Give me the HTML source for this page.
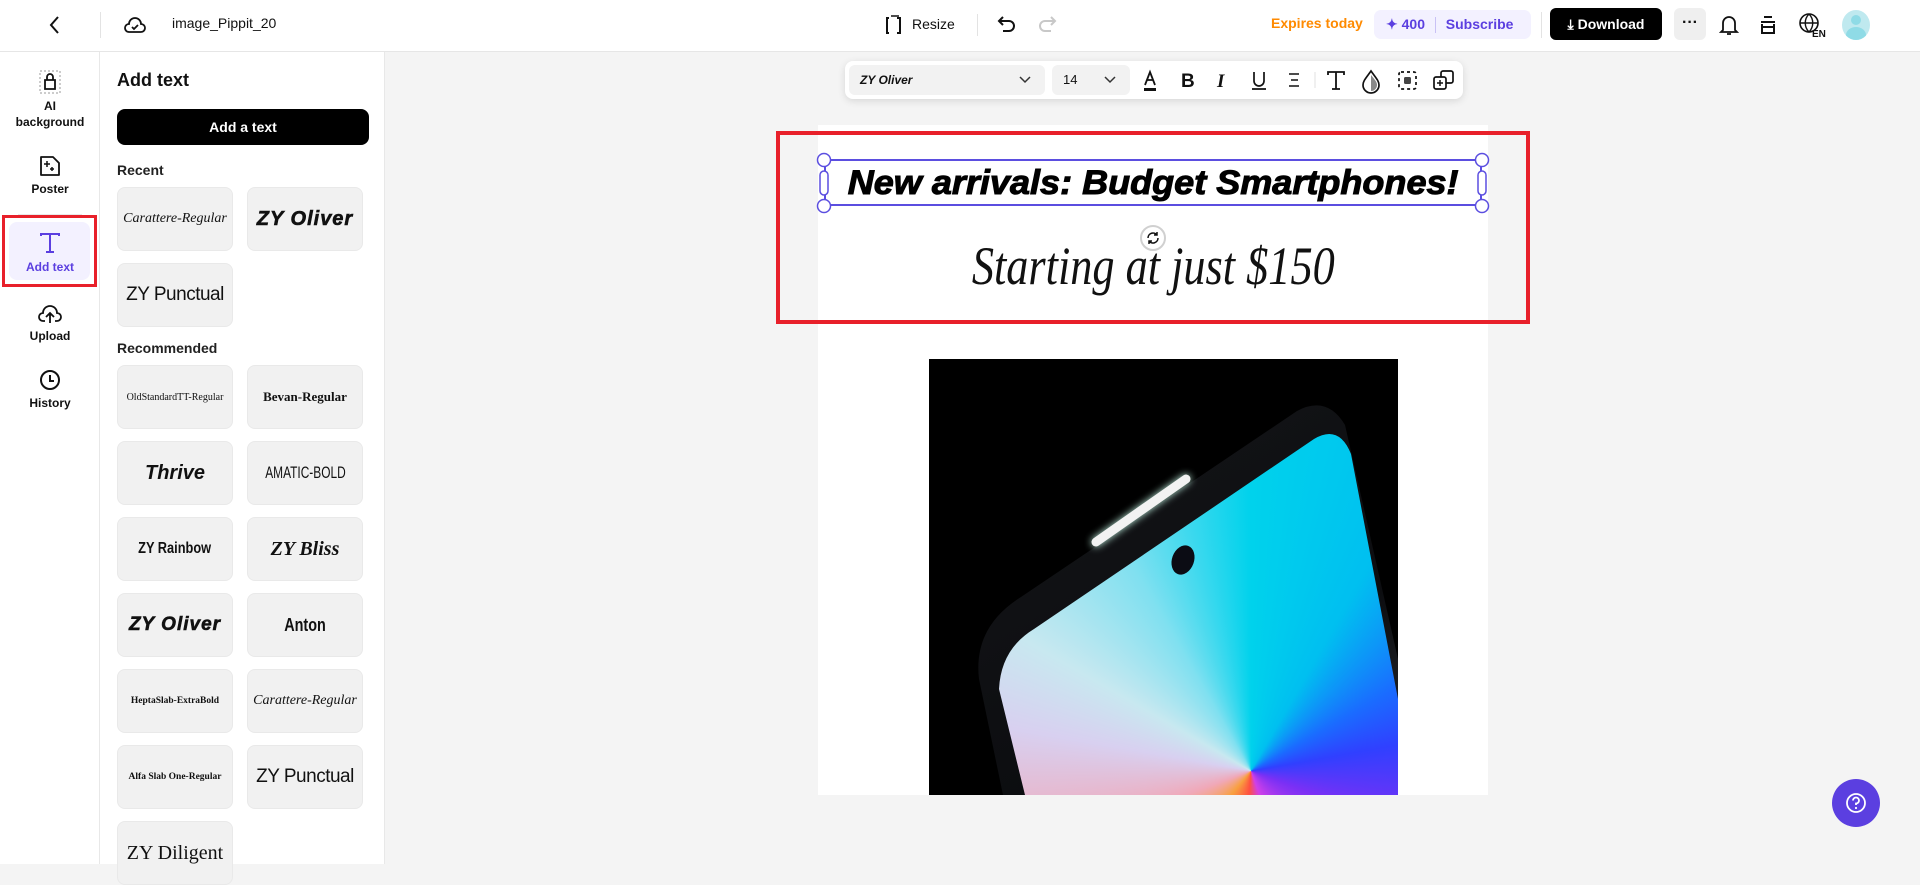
<!DOCTYPE html>
<html><head><meta charset="utf-8"><style>
*{box-sizing:border-box;margin:0;padding:0}
body{width:1920px;height:864px;overflow:hidden;background:#f4f4f4;font-family:"Liberation Sans",sans-serif;color:#111;position:relative}
.abs{position:absolute}
#top{left:0;top:0;width:1920px;height:52px;background:#fff;border-bottom:1px solid #e6e6e6}
#rail{left:0;top:52px;width:100px;height:812px;background:#fff;border-right:1px solid #e8e8e8}
#panel{left:100px;top:52px;width:285px;height:812px;background:#fff;border-right:1px solid #e8e8e8}
.ri{position:absolute;left:0;width:100px;text-align:center;font-size:12px;font-weight:bold;line-height:16px}
.card{position:absolute;width:116px;height:64px;background:#f1f1f1;border:1px solid #e9e9e9;border-radius:8px;display:flex;align-items:center;justify-content:center;overflow:hidden;white-space:nowrap;color:#111}
.lbl{position:absolute;left:117px;font-size:14px;font-weight:bold;color:#222}
svg{display:block}
</style></head><body>

<div id="top" class="abs">
  <svg class="abs" style="left:48px;top:14px" width="14" height="22" viewBox="0 0 14 22"><path d="M10 3 L3 11 L10 19" fill="none" stroke="#111" stroke-width="2"/></svg>
  <div class="abs" style="left:100px;top:12px;width:1px;height:26px;background:#e3e3e3"></div>
  <svg class="abs" style="left:123px;top:13px" width="24" height="24" viewBox="0 0 24 24"><path d="M6 19 H18 A4 4 0 0 0 18 11 A6 6 0 0 0 6 11 A4 4 0 0 0 6 19 Z" fill="none" stroke="#111" stroke-width="1.8"/><path d="M9 14 l2 2 l4 -4" fill="none" stroke="#111" stroke-width="1.8"/></svg>
  <div class="abs" style="left:172px;top:15px;font-size:14px;width:104px;overflow:hidden;white-space:nowrap">image_Pippit_2025</div>
  <svg class="abs" style="left:885px;top:14px" width="20" height="22" viewBox="0 0 20 22"><path d="M4 4 H2 V19 H4 M12 4 H15 V19 H12" fill="none" stroke="#111" stroke-width="2"/><path d="M6 2 H14 M15 6 V18" stroke="#111" stroke-width="1.5"/></svg>
  <div class="abs" style="left:912px;top:16px;font-size:14px">Resize</div>
  <div class="abs" style="left:977px;top:14px;width:1px;height:22px;background:#e3e3e3"></div>
  <svg class="abs" style="left:997px;top:13px" width="20" height="22" viewBox="0 0 20 22"><path d="M6 4 L2 8 L6 12 M2 8 H12 A5 5 0 0 1 12 18 H6" fill="none" stroke="#111" stroke-width="2"/></svg>
  <svg class="abs" style="left:1037px;top:13px" width="20" height="22" viewBox="0 0 20 22"><path d="M14 4 L18 8 L14 12 M18 8 H8 A5 5 0 0 0 8 18 H14" fill="none" stroke="#c8c8c8" stroke-width="2"/></svg>
  <div class="abs" style="left:1271px;top:15px;font-size:14px;font-weight:bold;color:#ff8a00">Expires today</div>
  <div class="abs" style="left:1374px;top:10px;width:157px;height:29px;background:#f3f1ff;border-radius:7px;font-size:14px;font-weight:bold;color:#5b3fe0;line-height:29px;padding-left:12px;white-space:nowrap">✦ 400 <span style="display:inline-block;width:1px;height:16px;background:#c9c1f5;vertical-align:middle;margin:0 6px"></span> Subscribe</div>
  <div class="abs" style="left:1541px;top:12px;width:1px;height:26px;background:#e3e3e3"></div>
  <div class="abs" style="left:1550px;top:8px;width:112px;height:32px;background:#000;border-radius:6px;color:#fff;font-size:14px;font-weight:bold;line-height:32px;text-align:center">⤓ Download</div>
  <div class="abs" style="left:1674px;top:8px;width:32px;height:32px;background:#efefef;border-radius:6px;text-align:center;line-height:30px;font-weight:bold;font-size:16px">···</div>
  <svg class="abs" style="left:1719px;top:13px" width="20" height="24" viewBox="0 0 20 24"><path d="M4 17 V10 A6 6 0 0 1 16 10 V17 L18 19 H2 Z M8 21 H12" fill="none" stroke="#111" stroke-width="1.8"/></svg>
  <svg class="abs" style="left:1758px;top:14px" width="20" height="22" viewBox="0 0 20 22"><path d="M6 3 H14 M3 8 H17 M4 10 V19 H16 V10 M4 13 H16" fill="none" stroke="#111" stroke-width="2"/></svg>
  <svg class="abs" style="left:1798px;top:12px" width="28" height="26" viewBox="0 0 28 26"><circle cx="11" cy="11" r="9" fill="none" stroke="#111" stroke-width="1.6"/><path d="M2 11 H20 M11 2 C6 7 6 15 11 20 C16 15 16 7 11 2" fill="none" stroke="#111" stroke-width="1.4"/><text x="14" y="25" font-family="Liberation Sans" font-weight="bold" font-size="10" fill="#111">EN</text></svg>
  <div class="abs" style="left:1842px;top:10px;width:28px;height:30px;border-radius:50%;background:#bfe9ef;overflow:hidden"><div style="position:absolute;left:9px;top:5px;width:10px;height:10px;border-radius:50%;background:#8fdbe6"></div><div style="position:absolute;left:4px;top:17px;width:20px;height:16px;border-radius:50%;background:#8fdbe6"></div></div>
</div>

<div id="rail" class="abs">
  <svg class="abs" style="left:39px;top:18px" width="22" height="24" viewBox="0 0 22 24"><rect x="1" y="1" width="20" height="22" fill="none" stroke="#999" stroke-dasharray="2 2"/><path d="M6 10 H16 V19 H6 Z M8 10 V7 A3 3 0 0 1 14 7 V10" fill="none" stroke="#111" stroke-width="1.8"/></svg>
  <div class="ri" style="top:46px">AI<br>background</div>
  <svg class="abs" style="left:39px;top:103px" width="22" height="22" viewBox="0 0 22 22"><path d="M2 2 H14 L20 8 V20 H2 Z" fill="none" stroke="#111" stroke-width="1.8" stroke-linejoin="round"/><path d="M8 6 V12 M5 9 H11 M13 12 V16 M11 14 H15" stroke="#111" stroke-width="1.5"/></svg>
  <div class="ri" style="top:129px">Poster</div>
  <div class="abs" style="left:18px;top:162px;width:64px;height:1px;background:#e8e8e8"></div>
  <div class="abs" style="left:2px;top:163px;width:95px;height:72px;border:3px solid #e8202a"></div>
  <div class="abs" style="left:9px;top:170px;width:81px;height:58px;background:#f3f1ff;border-radius:8px"></div>
  <svg class="abs" style="left:39px;top:180px" width="22" height="22" viewBox="0 0 22 22"><path d="M2 4 V2 H20 V4 M11 2 V20 M7 20 H15" fill="none" stroke="#5b3fe0" stroke-width="2"/></svg>
  <div class="ri" style="top:207px;color:#5b3fe0">Add text</div>
  <svg class="abs" style="left:38px;top:251px" width="24" height="22" viewBox="0 0 24 22"><path d="M7 18 H5 A4 4 0 0 1 5 10 A7 7 0 0 1 19 10 A4 4 0 0 1 19 18 H17 M12 20 V11 M8 14 L12 10 L16 14" fill="none" stroke="#111" stroke-width="1.8"/></svg>
  <div class="ri" style="top:276px">Upload</div>
  <svg class="abs" style="left:39px;top:317px" width="22" height="22" viewBox="0 0 22 22"><circle cx="11" cy="11" r="9" fill="none" stroke="#111" stroke-width="2"/><path d="M11 6 V12 H15" fill="none" stroke="#111" stroke-width="2"/></svg>
  <div class="ri" style="top:343px">History</div>
</div>

<div id="panel" class="abs"></div>
<div class="abs" style="left:117px;top:70px;font-size:18px;font-weight:bold">Add text</div>
<div class="abs" style="left:117px;top:109px;width:252px;height:36px;background:#000;border-radius:8px;color:#fff;font-size:14px;font-weight:bold;text-align:center;line-height:36px">Add a text</div>
<div class="lbl" style="top:162px">Recent</div>
<div class="card" style="left:117px;top:187px;font-family:'Liberation Serif',serif;font-style:italic;font-size:14px">Carattere-Regular</div>
<div class="card" style="left:247px;top:187px;font-weight:bold;font-style:italic;font-size:20px;letter-spacing:1px;-webkit-text-stroke:0.6px #111">ZY Oliver</div>
<div class="card" style="left:117px;top:263px;font-size:19px;letter-spacing:-0.5px">ZY Punctual</div>
<div class="lbl" style="top:340px">Recommended</div>
<div class="card" style="left:117px;top:365px;font-family:'Liberation Serif',serif;font-size:10px">OldStandardTT-Regular</div>
<div class="card" style="left:247px;top:365px;font-family:'Liberation Serif',serif;font-weight:bold;font-size:13px">Bevan-Regular</div>
<div class="card" style="left:117px;top:441px;font-weight:bold;font-style:italic;font-size:20px">Thrive</div>
<div class="card" style="left:247px;top:441px;font-size:17px;transform-origin:center"><span style="display:inline-block;transform:scaleX(0.7)">AMATIC-BOLD</span></div>
<div class="card" style="left:117px;top:517px;font-weight:bold;font-size:16px"><span style="display:inline-block;transform:scaleX(0.8)">ZY Rainbow</span></div>
<div class="card" style="left:247px;top:517px;font-family:'Liberation Serif',serif;font-style:italic;font-weight:bold;font-size:20px">ZY Bliss</div>
<div class="card" style="left:117px;top:593px;font-weight:bold;font-style:italic;font-size:19px;letter-spacing:1px;-webkit-text-stroke:0.6px #111">ZY Oliver</div>
<div class="card" style="left:247px;top:593px;font-weight:bold;font-size:18px"><span style="display:inline-block;transform:scaleX(0.8)">Anton</span></div>
<div class="card" style="left:117px;top:669px;font-family:'Liberation Serif',serif;font-weight:bold;font-size:9.5px">HeptaSlab-ExtraBold</div>
<div class="card" style="left:247px;top:669px;font-family:'Liberation Serif',serif;font-style:italic;font-size:14px">Carattere-Regular</div>
<div class="card" style="left:117px;top:745px;font-family:'Liberation Serif',serif;font-weight:bold;font-size:9.5px">Alfa Slab One-Regular</div>
<div class="card" style="left:247px;top:745px;font-size:19px;letter-spacing:-0.5px">ZY Punctual</div>
<div class="card" style="left:117px;top:821px;font-family:'Liberation Serif',serif;font-size:20px;align-items:flex-start;padding-top:20px">ZY Diligent</div>

<!-- toolbar -->
<div class="abs" style="left:845px;top:61px;width:618px;height:38px;background:#fff;border-radius:8px;box-shadow:0 2px 8px rgba(0,0,0,0.12)"></div>
<div class="abs" style="left:849px;top:65px;width:196px;height:30px;background:#f2f2f2;border-radius:6px;font-size:12px;font-weight:bold;font-style:italic;line-height:30px;padding-left:11px">ZY Oliver</div>
<svg class="abs" style="left:1019px;top:76px" width="12" height="8" viewBox="0 0 12 8"><path d="M1 1 L6 6 L11 1" fill="none" stroke="#333" stroke-width="1.5"/></svg>
<div class="abs" style="left:1052px;top:65px;width:78px;height:30px;background:#f2f2f2;border-radius:6px;font-size:13px;line-height:30px;padding-left:11px">14</div>
<svg class="abs" style="left:1104px;top:76px" width="12" height="8" viewBox="0 0 12 8"><path d="M1 1 L6 6 L11 1" fill="none" stroke="#333" stroke-width="1.5"/></svg>
<svg class="abs" style="left:1140px;top:68px" width="330" height="26" viewBox="0 0 330 26">
 <path d="M5 17 L10 4 L15 17 M7 12 H13" fill="none" stroke="#111" stroke-width="1.8"/><rect x="4" y="20" width="12" height="3" fill="#111"/>
 <text x="41" y="19" font-family="Liberation Sans" font-weight="bold" font-size="19" fill="#111">B</text>
 <text x="77" y="19" font-family="Liberation Serif" font-style="italic" font-weight="bold" font-size="19" fill="#111">I</text>
 <path d="M114 4 V13 A5 5 0 0 0 124 13 V4 M112 21 H126" fill="none" stroke="#111" stroke-width="1.7"/>
 <path d="M149 6 H159 M151 12 H158 M149 18 H159" stroke="#111" stroke-width="1.6"/>
 <path d="M175 4 V20" stroke="#e0e0e0"/>
 <path d="M188 7 V4 H204 V7 M196 4 V21 M192 21 H200" fill="none" stroke="#111" stroke-width="1.8"/>
 <path d="M231 3 C226 10 223 13 223 17 A8 8 0 0 0 239 17 C239 13 236 10 231 3 Z" fill="none" stroke="#111" stroke-width="1.7"/><path d="M231 7 C235 12 237 14 237 17 A6 6 0 0 1 231 23 Z" fill="#888"/>
 <rect x="259" y="4" width="17" height="17" rx="2" fill="none" stroke="#111" stroke-width="1.7" stroke-dasharray="3 3"/><rect x="264" y="9" width="7" height="7" rx="1.5" fill="#444"/>
 <rect x="301" y="3" width="12" height="12" rx="2" fill="none" stroke="#111" stroke-width="1.7"/><rect x="294" y="9" width="12" height="12" rx="2" fill="#fff" stroke="#111" stroke-width="1.7"/><path d="M300 12 V18 M297 15 H303" stroke="#111" stroke-width="1.5"/>
</svg>

<!-- page -->
<div class="abs" style="left:818px;top:125px;width:670px;height:670px;background:#fff"></div>
<div class="abs" style="left:776px;top:131px;width:754px;height:193px;border:4px solid #e8202a"></div>
<div class="abs" style="left:824px;top:159px;width:658px;height:47px;border:2px solid #5b4ee0"></div>
<div class="abs" style="left:824px;top:161px;width:658px;text-align:center;font-size:34px;font-weight:bold;font-style:italic;line-height:44px;white-space:nowrap;-webkit-text-stroke:1px #000;color:#000"><span style="display:inline-block;transform:scaleX(1.06)">New arrivals: Budget Smartphones!</span></div>
<svg class="abs" style="left:814px;top:150px" width="680" height="66" viewBox="0 0 680 66">
 <g fill="#fff" stroke="#5b4ee0" stroke-width="1.5">
 <circle cx="10" cy="10" r="6.5"/><circle cx="668" cy="10" r="6.5"/><circle cx="10" cy="56" r="6.5"/><circle cx="668" cy="56" r="6.5"/>
 <rect x="6" y="21" width="8" height="24" rx="4"/><rect x="664" y="21" width="8" height="24" rx="4"/></g>
</svg>
<div class="abs" style="left:1140px;top:225px;width:26px;height:26px;border-radius:50%;border:2px solid #d0d0d0;background:#fff"></div>
<svg class="abs" style="left:1145px;top:230px" width="16" height="16" viewBox="0 0 16 16"><path d="M3 8 A5 5 0 0 1 12 5 M13 8 A5 5 0 0 1 4 11 M12 2 V5 H9 M4 14 V11 H7" fill="none" stroke="#111" stroke-width="1.5"/></svg>
<div class="abs" style="left:900px;top:236px;width:506px;text-align:center;font-family:'Liberation Serif',serif;font-style:italic;font-size:54px;line-height:60px;white-space:nowrap"><span style="display:inline-block;transform:scaleX(0.82)">Starting at just $150</span></div>

<!-- phone image -->
<div class="abs" style="left:929px;top:359px;width:469px;height:436px;background:#000;overflow:hidden">
 <div class="abs" style="left:0;top:0;width:469px;height:436px;background:linear-gradient(150deg,#4a4d55,#121316 30%,#0c0d10 70%,#2b2d33);clip-path:path('M 50 320 Q 44 268 92 238 L 368 52 Q 398 36 416 66 L 469 300 L 469 436 L 74 436 Z')"></div>
 <div class="abs" style="left:0;top:0;width:469px;height:436px;background:conic-gradient(from 0deg at 322px 412px,#00d2ec 0deg,#00bff0 30deg,#1a6cff 60deg,#3040ff 80deg,#7a30f5 110deg,#d040e8 160deg,#ff5040 185deg,#f8a040 220deg,#f0a8b8 250deg,#d8d0f0 280deg,#c8e8f0 300deg,#80e0f0 330deg,#00d2ec 360deg);clip-path:path('M 70 330 Q 72 290 105 270 L 385 80 Q 410 65 422 95 L 469 340 L 469 436 L 96 436 Z')"></div>
 <svg class="abs" style="left:0;top:0" width="469" height="436"><line x1="257" y1="120" x2="167" y2="183" stroke="#fff" stroke-width="9" stroke-linecap="round" opacity="0.95" style="filter:drop-shadow(0 0 4px #cfe)"/><ellipse cx="254" cy="201" rx="11" ry="15" fill="#0b0c14" transform="rotate(20 254 201)"/></svg>
</div>

<div class="abs" style="left:1832px;top:779px;width:48px;height:48px;border-radius:50%;background:#5b3fe0"></div>
<svg class="abs" style="left:1844px;top:791px" width="24" height="24" viewBox="0 0 24 24"><circle cx="12" cy="12" r="9" fill="none" stroke="#fff" stroke-width="1.8"/><path d="M9 9.5 A3 3 0 1 1 12 12.5 V14" fill="none" stroke="#fff" stroke-width="1.8"/><circle cx="12" cy="17" r="1.1" fill="#fff"/></svg>
</body></html>
